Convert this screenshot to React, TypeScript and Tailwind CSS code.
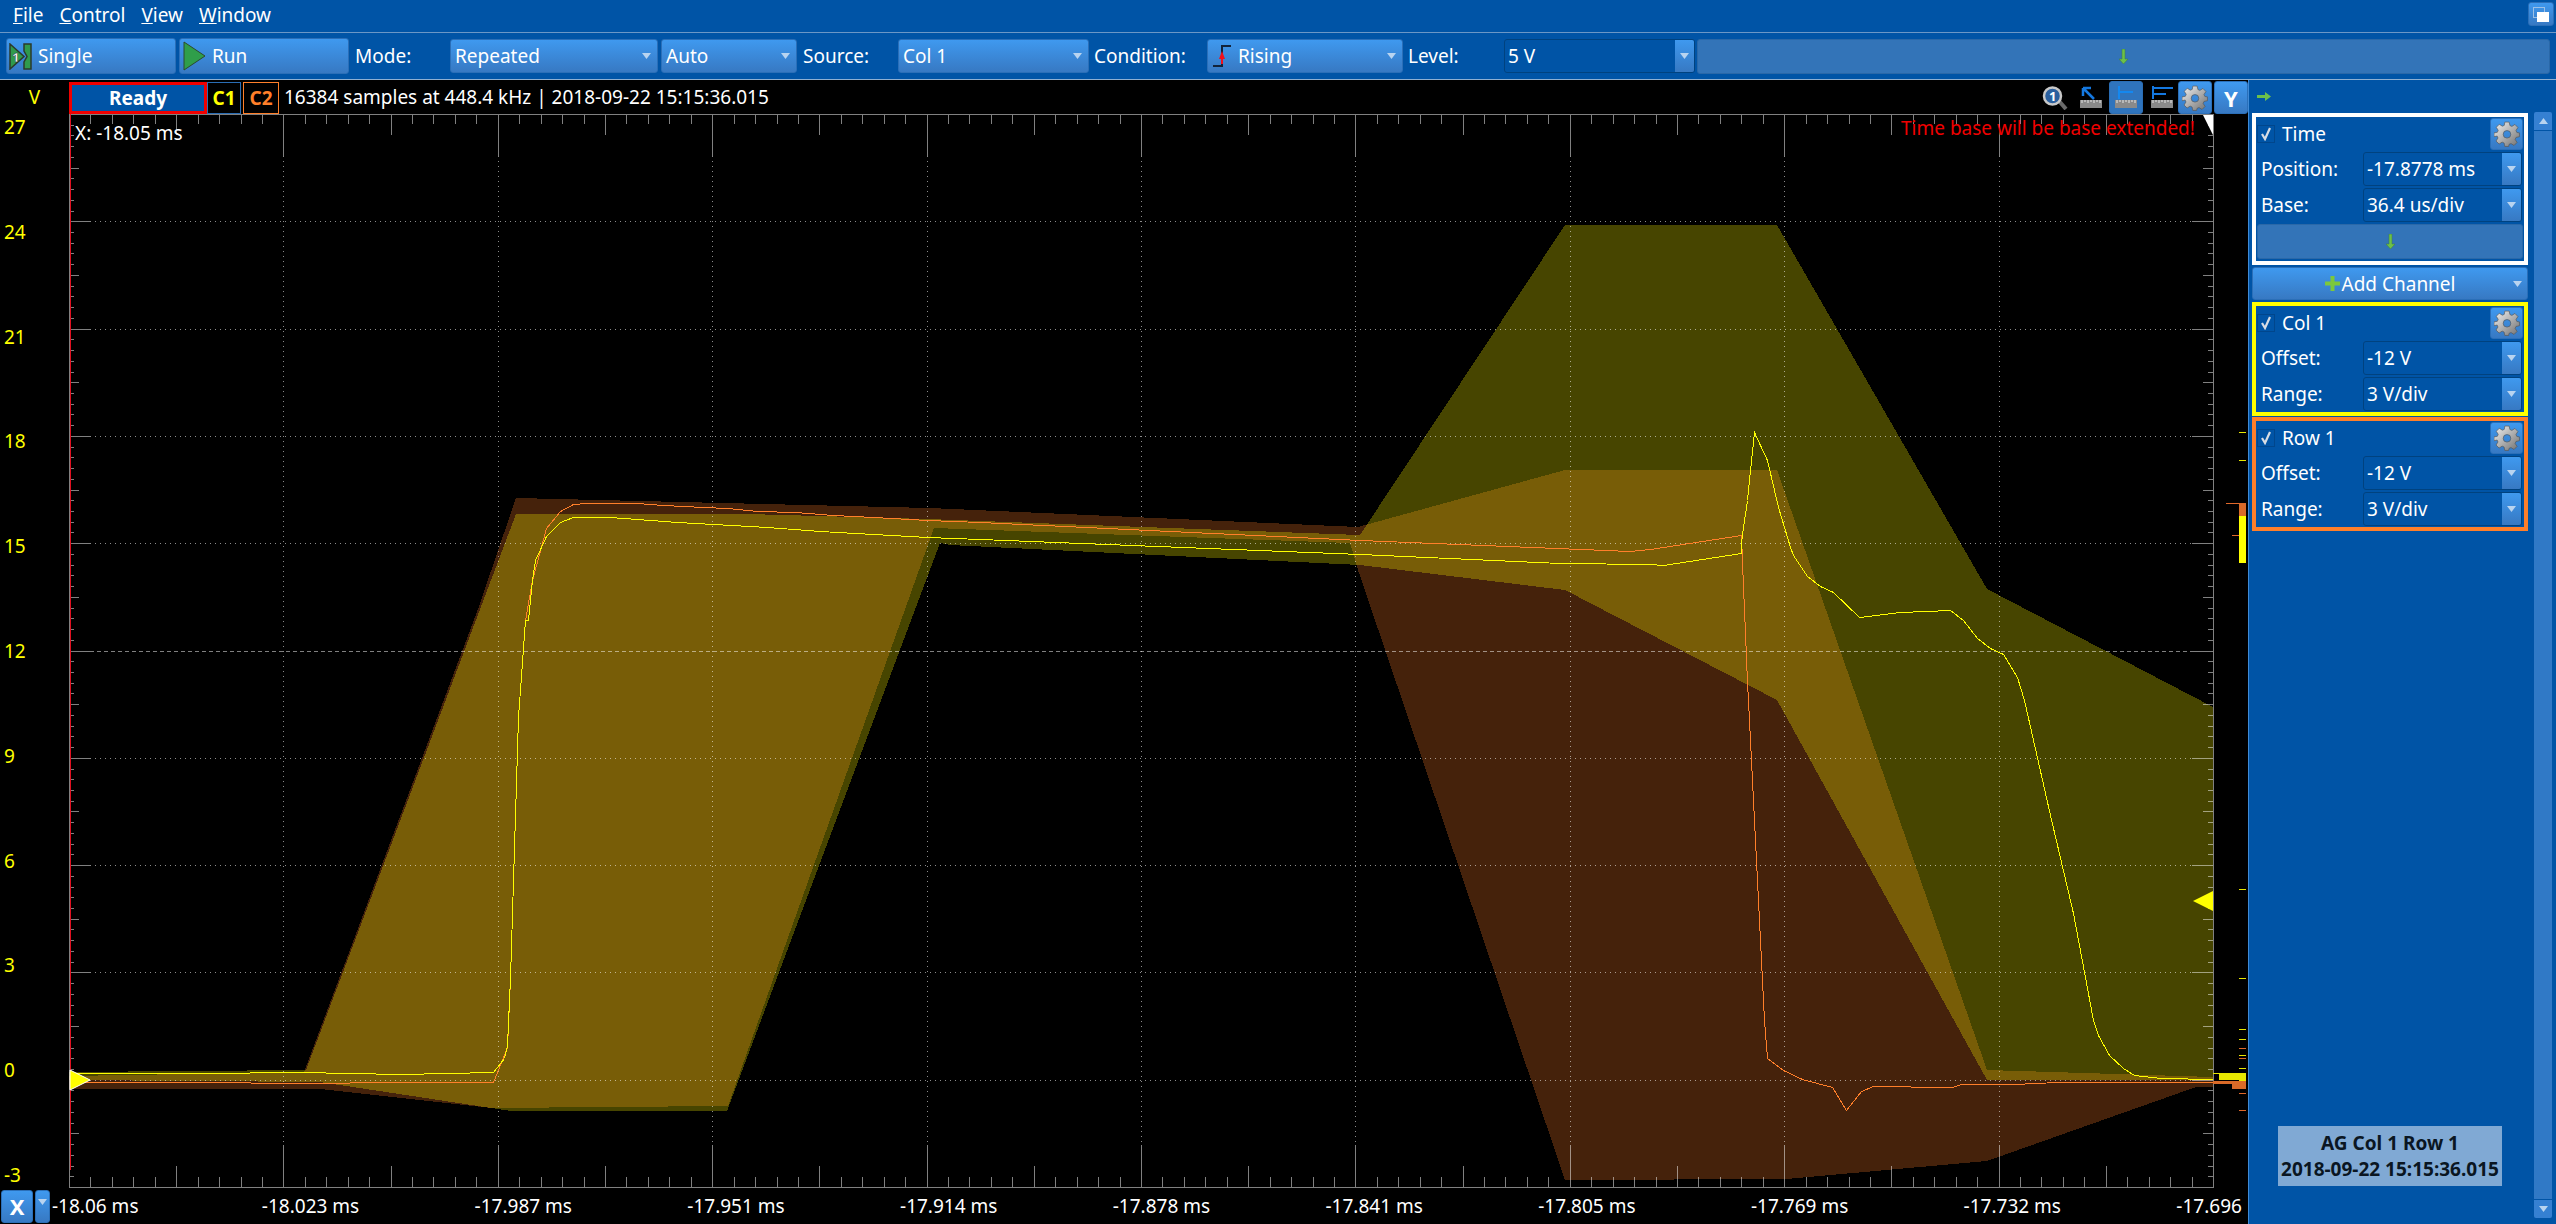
const orangeEnvelope = "69,1076 304,1072 478,609 516,498 930,508 1358,527 1565,470 1777,470 1987,1070 2213,1077 2213,1087 2196,1087 1987,1161 1786,1179 1565,1180 1358,570 1350,543 934,528 728,1106 491,1108 320,1089 69,1089";
const yellowEnvelope = "69,1072 306,1070 516,514 747,514 927,519 1360,535 1565,225 1777,225 1987,589 2213,707 2213,1080 1987,1080 1777,700 1565,590 1360,565 950,545 940,543 727,1111 511,1111 320,1082 69,1080";
const yellowTrace = "69,1073 200,1073 300,1072 400,1074 493,1072 504,1058 507,1045 510,978 518,717 525,620 528,620 532,580 535,560 546,536 560,522 573,517 610,517 637,519 677,522 713,524 767,527 820,531 873,534 927,537 980,539 1360,554 1560,563 1650,564 1663,565 1741,553 1741,543 1743,527 1747,500 1750,470 1754,432 1767,460 1778,507 1790,547 1793,555 1807,576 1820,586 1833,592 1859,617 1900,612 1950,610 1963,620 1977,638 1990,648 2003,654 2017,677 2024,700 2050,815 2073,913 2093,1020 2098,1035 2109,1055 2123,1068 2134,1075 2161,1078 2213,1079";
const orangeTrace = "69,1082 200,1082 300,1083 400,1082 493,1082 507,1047 510,978 518,717 525,620 532,580 546,528 560,511 573,504 587,503 637,503 663,505 703,507 728,508 757,511 795,512 833,515 873,517 927,520 980,522 1360,540 1630,551 1650,549 1741,535 1743,587 1745,633 1747,683 1748,700 1764,1020 1767,1058 1783,1070 1802,1079 1832,1087 1846,1110 1861,1091 1873,1086 1896,1086 1925,1087 1952,1087 1961,1084 2014,1084 2057,1082 2213,1082";

const xLabels = ["-18.06 ms", "-18.023 ms", "-17.987 ms", "-17.951 ms", "-17.914 ms", "-17.878 ms", "-17.841 ms", "-17.805 ms", "-17.769 ms", "-17.732 ms", "-17.696"];
const yLabels = ["27", "24", "21", "18", "15", "12", "9", "6", "3", "0", "-3"];

const X0 = 69;
const X1 = 2213;
const Y0 = 114;
const Y1 = 1187;
const DX = (X1 - X0) / 100;
const DY = (Y1 - Y0) / 100;

function tickPath() {
  let d = `M${X0} ${Y0}H${X1}V${Y1}H${X0}Z`;
  for (let i = 0; i <= 100; i++) {
    const x = Math.round(X0 + i * DX);
    const len = i % 10 === 0 ? 42 : i % 5 === 0 ? 21 : 10;
    d += `M${x} ${Y0}v${len}M${x} ${Y1}v${-len}`;
    const y = Math.round(Y0 + i * DY);
    const w = i % 10 === 0 ? 21 : i % 5 === 0 ? 10 : 5;
    d += `M${X0} ${y}h${w}M${X1} ${y}h${-w}`;
  }
  return d;
}

function gridPath(center: boolean) {
  let d = "";
  for (let i = 1; i < 10; i++) {
    const y = Math.round(Y0 + i * 10 * DY);
    if ((i === 5) === center) d += `M${X0 + 21} ${y}H${X1 - 21}`;
    if (center) continue;
    const x = Math.round(X0 + i * 10 * DX);
    d += `M${x} ${Y0 + 42}V${Y1 - 42}`;
  }
  return d;
}

function Scope() {
  return (
    <svg className="block w-[2179px] h-[1074px]" viewBox="69 114 2179 1074" shapeRendering="crispEdges">
      <polygon points={orangeEnvelope} fill="#ff7f2a" fillOpacity="0.27" />
      <polygon points={yellowEnvelope} fill="#fff800" fillOpacity="0.278" />
      <path d={gridPath(false)} stroke="#fff" strokeOpacity="0.55" strokeDasharray="1 4" fill="none" />
      <path d={gridPath(true)} stroke="#fff" strokeOpacity="0.5" strokeDasharray="4 3" fill="none" />
      <path d={tickPath()} stroke="#fff" strokeOpacity="0.5" fill="none" />
      <g transform="translate(0.5 0.5)">
        <polyline points={orangeTrace} fill="none" stroke="#ff7f2a" />
        <polyline points={yellowTrace} fill="none" stroke="#ffff00" />
      </g>
      <path d="M70 114V1170" stroke="#e01020" />
      {/* histogram strip on the right */}
      <path d="M2239 432h7M2239 460h7M2239 889h7M2239 978h7M2239 1029h7M2239 1039h7M2239 1055h7M2239 1068h7M2213 1073h33M2232 1078h7" stroke="#e8e800" />
      <path d="M2226 503h20M2232 535h14M2239 1048h7M2239 1058h7M2239 1093h7M2239 1110h7" stroke="#e0682a" />
      <rect x="2239" y="503" width="7" height="13" fill="#d96a28" />
      <rect x="2239" y="516" width="7" height="47" fill="#ffff00" />
      <rect x="2219" y="1074" width="27" height="6" fill="#e8e800" />
      <rect x="2239" y="1080" width="7" height="1" fill="#e8e800" />
      <rect x="2213" y="1081" width="33" height="3" fill="#d96a28" />
      <rect x="2232" y="1084" width="14" height="5" fill="#d96a28" />
      {/* markers */}
      <polygon points="70,1070 90,1080 70,1090" fill="#ffff00" stroke="#fff" strokeWidth="1" shapeRendering="auto" />
      <polygon points="2213,891 2193,901 2213,911" fill="#ffff00" shapeRendering="auto" />
      <polygon points="2203,115 2213,115 2213,135" fill="#fff" shapeRendering="auto" />
    </svg>
  );
}

function Caret() {
  return (
    <svg width="9" height="6" viewBox="0 0 9 6" className="shrink-0">
      <polygon points="0,0 9,0 4.5,6" fill="#b9d4f0" />
    </svg>
  );
}

function GreenDown() {
  return (
    <svg width="9" height="15" viewBox="0 0 9 15">
      <path d="M3 0h3v10h3l-4.500 5L0 10h3z" fill="#6cc04a" stroke="#3f7f3a" strokeWidth="0.5" />
    </svg>
  );
}

function Gear({ size = 26 }: { size?: number }) {
  return (
    <svg width={size} height={size} viewBox="0 0 24 24">
      <defs>
        <linearGradient id="gearFill" x1="0" y1="0" x2="1" y2="1">
          <stop offset="0" stopColor="#f2f2f2" />
          <stop offset="1" stopColor="#6f6f6f" />
        </linearGradient>
      </defs>
      <path
        fillRule="evenodd"
        d="M10 1h4l.7 3.200 1.800.8 2.800-1.800 2.800 2.800-1.800 2.800.8 1.800L23.500 11v3.500l-3.200.7-.8 1.800 1.800 2.800-2.800 2.800-2.800-1.800-1.800.8L13.500 23.500H10l-.7-3.200-1.800-.8-2.800 1.800-2.800-2.800 1.800-2.800-.8-1.800L0 14.500V11l3.100-.6.8-1.800-1.800-2.800 2.800-2.800 2.800 1.800 1.800-.8zM12 8.800a3.500 3.500 0 1 0 0 7 3.500 3.500 0 0 0 0-7z"
        fill="url(#gearFill)"
        stroke="#555"
        strokeWidth="0.6"
      />
    </svg>
  );
}

function RulerIcon({ children }: { children: React.ReactNode }) {
  return (
    <svg width="24" height="24" viewBox="0 0 24 24">
      {children}
      <rect x="1" y="14" width="22" height="8" fill="#8a8a8a" />
      <path d="M3 14v3M6 14v2M9 14v3M12 14v2M15 14v3M18 14v2M21 14v3" stroke="#e8e8e8" strokeWidth="1" />
    </svg>
  );
}

const btn = "bg-linear-to-b from-[#3f99ef] to-[#3779c3] border border-[#2b6fb8] rounded-[3px] text-white";

function ToolButton({ label, icon, width }: { label: string; icon: React.ReactNode; width: string }) {
  return (
    <div className={`${btn} ${width} h-[36px] flex items-center pl-[2px] gap-[6px]`}>
      {icon}
      <span>{label}</span>
    </div>
  );
}

function Combo({ value, width, icon }: { value: string; width: string; icon?: React.ReactNode }) {
  return (
    <div className={`${btn} ${width} h-[34px] flex items-center pl-[4px] pr-[6px] gap-[6px]`}>
      {icon}
      <span className="flex-1">{value}</span>
      <Caret />
    </div>
  );
}

function Field({ value, width = "w-[159px]" }: { value: string; width?: string }) {
  return (
    <div className={`${width} h-[34px] flex items-center bg-[#0054a6] border border-[#00427f] rounded-[3px] overflow-hidden`}>
      <span className="flex-1 pl-[3px] text-white">{value}</span>
      <div className="w-[19px] h-full flex items-center justify-center bg-linear-to-b from-[#3f99ef] to-[#3779c3]">
        <Caret />
      </div>
    </div>
  );
}

function Row({ label, value }: { label: string; value: string }) {
  return (
    <div className="flex items-center justify-between pl-[5px] pr-[2px] text-white">
      <span>{label}</span>
      <Field value={value} />
    </div>
  );
}

function Header({ title }: { title: string }) {
  return (
    <div className="flex items-center h-[32px] pl-px pr-px text-white">
      <div className="w-[18px] h-[18px] flex items-center justify-center border border-[#00468c] mr-[7px]">
        <svg width="12" height="14" viewBox="0 0 12 14">
          <path d="M2 7l3 5 5-11" fill="none" stroke="#d8dde4" strokeWidth="2.200" />
        </svg>
      </div>
      <span className="flex-1">{title}</span>
      <div className={`${btn} w-[33px] h-[32px] flex items-center justify-center`}>
        <Gear />
      </div>
    </div>
  );
}

function ChannelBox({ title, offset, range, border }: { title: string; offset: string; range: string; border: string }) {
  return (
    <div className={`${border} border-[4px] h-[114px] flex flex-col gap-[2px] pt-px`}>
      <Header title={title} />
      <Row label="Offset:" value={offset} />
      <Row label="Range:" value={range} />
    </div>
  );
}

function MenuBar() {
  return (
    <div className="h-[33px] shrink-0 flex items-start border-b border-[#6b97c6] text-white">
      <div className="flex gap-[16px] pl-[13px] pt-[3px]">
        {["File", "Control", "View", "Window"].map((m) => (
          <span key={m}>
            <span className="underline">{m[0]}</span>
            {m.slice(1)}
          </span>
        ))}
      </div>
      <div className={`${btn} ml-auto mr-[2px] mt-[2px] w-[26px] h-[24px] flex items-center justify-center`}>
        <svg width="16" height="15" viewBox="0 0 16 15">
          <rect x="0.500" y="0.500" width="11" height="10" fill="none" stroke="#9cc0e6" />
          <rect x="4" y="5" width="12" height="10" fill="#fff" />
        </svg>
      </div>
    </div>
  );
}

function Toolbar() {
  return (
    <div className="h-[47px] shrink-0 flex items-center border-b border-[#8fb0d2] pl-[6px] text-white">
      <ToolButton
        label="Single"
        width="w-[170px]"
        icon={
          <svg width="23" height="27" viewBox="0 0 23 27">
            <polygon points="1,1 15,13.500 1,26" fill="#2f9a4c" stroke="#2b3a2b" strokeWidth="1.500" />
            <path d="M15 1h7v25h-7v-7l3-5.500-3-5.500z" fill="#2f9a4c" stroke="#2b3a2b" strokeWidth="1.500" />
            <text x="3" y="19" fontSize="13" fontWeight="700" fill="#fff" stroke="#222" strokeWidth="0.400" fontFamily="Noto Sans">1</text>
          </svg>
        }
      />
      <ToolButton
        label="Run"
        width="w-[170px] ml-[3px]"
        icon={
          <svg width="24" height="30" viewBox="0 0 24 30">
            <polygon points="2,1 23,15 2,29" fill="#2f9e4a" stroke="#2c4a2c" />
          </svg>
        }
      />
      <span className="ml-[6px] w-[95px]">Mode:</span>
      <Combo value="Repeated" width="w-[208px]" />
      <Combo value="Auto" width="w-[136px] ml-[3px]" />
      <span className="ml-[6px] w-[95px]">Source:</span>
      <Combo value="Col 1" width="w-[191px]" />
      <span className="ml-[5px] w-[113px]">Condition:</span>
      <Combo
        value="Rising"
        width="w-[196px]"
        icon={
          <svg width="20" height="24" viewBox="0 0 20 24">
            <path d="M1 22h9V2h9" fill="none" stroke="#12233a" strokeWidth="2" />
            <polygon points="10,7 13,15 7,15" fill="#f0101c" />
            <rect x="9" y="14" width="2" height="6" fill="#f0101c" />
          </svg>
        }
      />
      <span className="ml-[5px] w-[96px]">Level:</span>
      <Field value="5 V" width="w-[191px]" />
      <div className="ml-[2px] w-[853px] h-[35px] flex items-center justify-center bg-[#3374b8] border border-[#2a68a8] rounded-[3px]">
        <GreenDown />
      </div>
    </div>
  );
}

function StatusStrip() {
  return (
    <div className="h-[34px] shrink-0 flex items-end text-white">
      <div className="w-[69px] self-center text-center text-[#ffff00]">V</div>
      <div className="w-[138px] h-[32px] flex items-center justify-center bg-[#0054a6] border-[3px] border-[#f00000] font-bold">Ready</div>
      <div className="w-[34px] h-[32px] flex items-center justify-center border border-[#2a6db4] text-[#ffff00] font-bold">C1</div>
      <div className="w-[36px] h-[32px] ml-[2px] flex items-center justify-center border border-[#ff7f2a] text-[#ff7f2a] font-bold">C2</div>
      <span className="ml-[5px] self-center">16384 samples at 448.4 kHz | 2018-09-22 15:15:36.015</span>
      <div className="ml-auto h-[33px] flex items-center">
        <svg width="26" height="24" viewBox="0 0 26 24" className="mr-[11px]">
          <path d="M17 15l7 8" stroke="#6a6a6a" strokeWidth="4" />
          <circle cx="10.500" cy="10" r="8.500" fill="#2a5f9e" stroke="#c8c8c8" strokeWidth="2.500" />
          <text x="7" y="15" fontSize="13" fontWeight="700" fill="#fff" fontFamily="Noto Sans">1</text>
        </svg>
        <RulerIcon>
          <path d="M4 2l11 11M4 2v8M4 2h8" fill="none" stroke="#1478e0" strokeWidth="2.500" />
        </RulerIcon>
        <div className="ml-[6px] w-[34px] h-[33px] flex items-center justify-center bg-[#2f74bd] border border-[#2a6db4] rounded-[3px]">
          <RulerIcon>
            <path d="M5 0v13M5 6h14" fill="none" stroke="#1488f0" strokeWidth="2" />
          </RulerIcon>
        </div>
        <div className="ml-[7px]">
          <RulerIcon>
            <path d="M3 0v13M3 2h20M3 8h13" fill="none" stroke="#1478e0" strokeWidth="2" />
          </RulerIcon>
        </div>
        <div className={`${btn} ml-[4px] w-[34px] h-[33px] flex items-center justify-center`}>
          <Gear />
        </div>
        <div className={`${btn} ml-[2px] w-[34px] h-[33px] flex items-center justify-center font-bold text-[22px]`}>Y</div>
      </div>
    </div>
  );
}

function AxisRow() {
  return (
    <div className="flex-1 flex items-center text-white">
      <div className={`${btn} ml-px w-[32px] h-[33px] flex items-center justify-center font-bold text-[22px]`}>X</div>
      <div className={`${btn} ml-[2px] w-[15px] h-[33px] flex items-start justify-center pt-[8px]`}>
        <Caret />
      </div>
      <div className="flex-1 flex justify-between pl-[2px] pr-[6px]">
        {xLabels.map((l) => (
          <span key={l} className="first:mr-[8px]">{l}</span>
        ))}
      </div>
    </div>
  );
}

function RightPanel() {
  return (
    <div className="flex-1 flex border-l border-[#3f8ad6] pl-[3px] text-white">
      <div className="w-[276px] flex flex-col">
        <div className="h-[33px] flex items-center pl-[5px]">
          <svg width="14" height="9" viewBox="0 0 14 9">
            <path d="M0 3h8V0l6 4.500L8 9V6H0z" fill="#6cc04a" />
          </svg>
        </div>
        <div className="border-[4px] border-white h-[152px] flex flex-col gap-[2px] pt-px">
          <Header title="Time" />
          <Row label="Position:" value="-17.8778 ms" />
          <Row label="Base:" value="36.4 us/div" />
          <div className="mx-[1px] h-[35px] flex items-center justify-center bg-[#3374b8] border border-[#2a68a8] rounded-[3px]">
            <GreenDown />
          </div>
        </div>
        <div className={`${btn} mt-[2px] h-[33px] flex items-center justify-center relative`}>
          <svg width="15" height="15" viewBox="0 0 15 15">
            <path d="M5.500 0h4v5.500H15v4H9.500V15h-4V9.500H0v-4h5.500z" fill="#7cc83c" />
          </svg>
          <span className="ml-[2px]">Add Channel</span>
          <div className="absolute right-[5px] top-[13px]">
            <Caret />
          </div>
        </div>
        <div className="mt-[2px]">
          <ChannelBox title="Col 1" offset="-12 V" range="3 V/div" border="border-[#ffff00]" />
        </div>
        <div className="mt-px">
          <ChannelBox title="Row 1" offset="-12 V" range="3 V/div" border="border-[#ff7f2a]" />
        </div>
        <div className="mt-auto mb-[38px] mx-auto w-[224px] h-[60px] flex flex-col items-center justify-center bg-[#80a9d4] text-[#0a1622] font-bold leading-[26px]">
          <span>AG Col 1 Row 1</span>
          <span>2018-09-22 15:15:36.015</span>
        </div>
      </div>
      <div className="ml-[6px] w-[18px] flex flex-col pt-[32px] pb-[6px] gap-px">
        <div className="h-[18px] flex items-center justify-center bg-[#3580d2] rounded-t-[2px]">
          <svg width="9" height="6" viewBox="0 0 9 6">
            <polygon points="0,6 9,6 4.500,0" fill="#b9d4f0" />
          </svg>
        </div>
        <div className="flex-1 bg-[#3079c6]" />
        <div className="h-[18px] flex items-center justify-center bg-[#3580d2] rounded-b-[2px]">
          <Caret />
        </div>
      </div>
    </div>
  );
}

export default function App() {
  return (
    <div className="w-[2556px] h-[1224px] overflow-hidden flex flex-col bg-[#0054a6] font-['Noto_Sans',sans-serif] text-[19px] leading-[24px]">
      <MenuBar />
      <Toolbar />
      <div className="flex-1 flex min-h-0">
        <div className="w-[2248px] shrink-0 flex flex-col bg-black">
          <StatusStrip />
          <div className="h-[1074px] shrink-0 flex">
            <div className="w-[69px] shrink-0 flex flex-col justify-between items-start pl-[4px] py-px text-[#ffff00] overflow-hidden">
              {yLabels.map((l) => (
                <span key={l}>{l}</span>
              ))}
            </div>
            <div className="relative">
              <Scope />
              <span className="absolute left-[6px] top-[7px] text-white">X: -18.05 ms</span>
              <span className="absolute left-[1832px] top-[2px] text-[#f00000] whitespace-nowrap">Time base will be base extended!</span>
            </div>
          </div>
          <AxisRow />
        </div>
        <RightPanel />
      </div>
    </div>
  );
}
